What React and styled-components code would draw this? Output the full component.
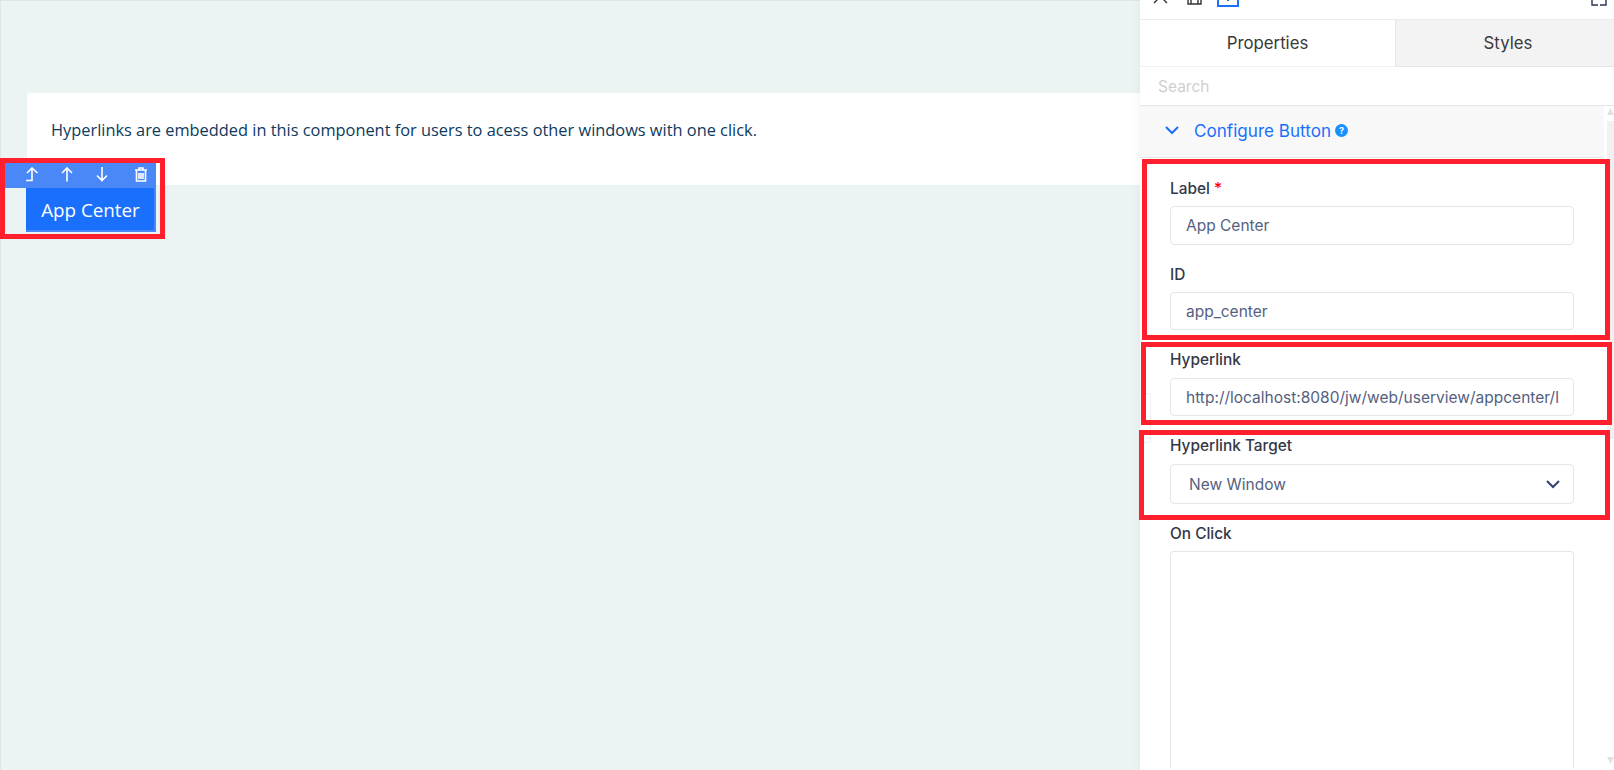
import React from "react";
import styled, { createGlobalStyle } from "styled-components";

const GlobalStyle = createGlobalStyle`
  html, body {
    margin: 0;
    padding: 0;
    height: 770px;
    overflow: hidden;
    background: #fff;
  }
  * {
    box-sizing: border-box;
  }
`;

const Page = styled.div`
  display: flex;
  width: 1614px;
  height: 770px;
  overflow: hidden;
`;

const Canvas = styled.main`
  width: 1140px;
  height: 770px;
  flex: none;
  padding: 92px 0 0 26px;
  background: #ecf3f3;
  border-left: 1px solid #e0e5e4;
  border-top: 1px solid #e0e5e4;
  font-family: "Open Sans", sans-serif;
`;

const Card = styled.section`
  height: 92px;
  padding: 25px 24px;
  background: #fff;
  border-radius: 3px 0 0 3px;
  color: #0e3a5e;
  font-size: 16.37px;
  line-height: 24px;
`;

const SelectedButton = styled.div`
  position: relative;
  width: 130px;
  height: 44px;
  margin: 3px 0 0 -1px;
  padding: 0 2px 2px 0;
  background: #4a88f7;
`;

const ButtonFace = styled.a`
  display: flex;
  align-items: center;
  justify-content: center;
  height: 100%;
  padding: 2px 0 0 1px;
  background: #1a6ffc;
  color: #fff;
  font-size: 18.8px;
`;

const ActionBar = styled.div`
  position: absolute;
  left: -21px;
  top: -25px;
  width: 151px;
  height: 25px;
  background: #4a88f7;
  color: #fff;
`;

const ActionIcon = styled.svg`
  position: absolute;
  top: 4px;
  left: ${(p) => p.$x}px;
  width: 18px;
  height: 18px;
  fill: none;
  stroke: currentColor;
  stroke-width: 1.6;
`;

const Panel = styled.aside`
  position: relative;
  width: 474px;
  height: 770px;
  flex: none;
  background: #fff;
  box-shadow: -3px 0 8px rgba(0, 0, 0, 0.03);
  font-family: Inter, sans-serif;
  color: #2f3542;
`;

const TopBar = styled.div`
  display: flex;
  align-items: flex-start;
  height: 19px;
  overflow: hidden;
  padding: 0 7px 0 13px;
  color: #333;
`;

const TopIcon = styled.svg`
  flex: none;
  width: ${(p) => p.$size}px;
  height: ${(p) => p.$size}px;
  margin-top: ${(p) => p.$top}px;
  margin-left: ${(p) => p.$gap || 0};
  fill: none;
  stroke: ${(p) => p.$color || "currentColor"};
  stroke-width: ${(p) => p.$weight || 1.4};
`;

const Tabs = styled.div`
  display: flex;
  height: 48px;
  font-size: 16.8px;
`;

const Tab = styled.div`
  display: flex;
  align-items: center;
  justify-content: center;
  width: ${(p) => (p.$active ? 255 : 219)}px;
  padding-left: ${(p) => (p.$active ? 0 : 6)}px;
  border-top: 1px solid #ececec;
  border-left: ${(p) => (p.$active ? "none" : "1px solid #e8e8e8")};
  border-bottom: 1px solid ${(p) => (p.$active ? "#f2f2f2" : "#e6e6e6")};
  background: ${(p) => (p.$active ? "#fff" : "#f3f3f3")};
  color: #3a3a3a;
`;

const SearchRow = styled.div`
  display: flex;
  align-items: center;
  height: 39px;
  padding-left: 18px;
  border-bottom: 1px solid #e4e4e4;
  color: #cfcfcf;
  font-size: 15.5px;
`;

const Body = styled.div`
  display: flex;
`;

const Content = styled.div`
  width: 464px;
`;

const SectionHeader = styled.div`
  display: flex;
  align-items: center;
  height: 52px;
  padding: 0 0 3px 25px;
  background: #f8f8f8;
  border-bottom: 1px solid #e6e6e6;
  color: #1a6ffc;
  font-size: 17.1px;
`;

const SectionTitle = styled.span`
  margin-left: 15px;
`;

const Help = styled.span`
  display: flex;
  align-items: center;
  justify-content: center;
  width: 13px;
  height: 13px;
  margin-left: 4px;
  border-radius: 50%;
  background: #1890ff;
  color: #fff;
  font-size: 9px;
  font-weight: 700;
`;

const Fields = styled.div`
  display: flex;
  flex-direction: column;
  padding: 0 30px;
`;

const Label = styled.label`
  display: block;
  height: 18px;
  line-height: 18px;
  margin: ${(p) => p.$top}px 0 ${(p) => p.$bottom}px;
  font-size: 15.4px;
  font-weight: 450;
  color: #333846;
`;

const Required = styled.span`
  color: #f00;
`;

const Input = styled.div`
  display: flex;
  align-items: center;
  justify-content: space-between;
  height: ${(p) => p.$h}px;
  padding: 0 13px 0 ${(p) => p.$pad || 15}px;
  border: 1px solid #e6e6e6;
  border-radius: 4px;
  color: #55617f;
  font-size: 15.5px;
  white-space: nowrap;
  overflow: hidden;
`;

const Clip = styled.span`
  display: block;
  width: 373px;
  overflow: hidden;
`;

const Textarea = styled.div`
  height: 217px;
  border: 1px solid #e6e6e6;
  border-bottom: none;
  border-radius: 4px 4px 0 0;
`;

const Scrollbar = styled.div`
  position: relative;
  width: 10px;
  height: 664px;
  background: #fff;
`;

const Thumb = styled.div`
  position: absolute;
  top: 15px;
  left: 3px;
  right: 0;
  height: 318px;
  background: #f1f1f1;
`;

const Arrow = styled.svg`
  position: absolute;
  left: 3px;
  ${(p) => (p.$down ? "bottom: 6px;" : "top: 2px;")}
  width: 7px;
  height: 7px;
  fill: #e2e2e2;
`;

const Handle = styled.div`
  position: absolute;
  left: 0;
  top: 393px;
  width: 11px;
  height: 50px;
  background: #fff;
  border: 1px solid #efefef;
  border-left: none;
  border-radius: 0 3px 3px 0;
`;

const RedBox = styled.div`
  position: fixed;
  left: ${(p) => p.$x}px;
  top: ${(p) => p.$y}px;
  width: ${(p) => p.$w}px;
  height: ${(p) => p.$h}px;
  border: 5px solid #ff1f2d;
  pointer-events: none;
`;

const highlights = [
  { x: 0, y: 158, w: 165, h: 81 },
  { x: 1142, y: 159, w: 468, h: 181 },
  { x: 1141, y: 342, w: 471, h: 83 },
  { x: 1139, y: 430, w: 471, h: 90 },
];

export default function App() {
  return (
    <Page>
      <GlobalStyle />
      <Canvas>
        <Card>
          Hyperlinks are embedded in this component for users to acess other
          windows with one click.
        </Card>
        <SelectedButton>
          <ActionBar>
            <ActionIcon $x={21} viewBox="0 0 18 18">
              <path d="M0 13.500h6V1M1 6l5-5 5.500 5" />
            </ActionIcon>
            <ActionIcon $x={53} viewBox="0 0 18 18">
              <path d="M9 14.500V1M4 6l5-5 5 5" />
            </ActionIcon>
            <ActionIcon $x={88} viewBox="0 0 18 18">
              <path d="M9 0v13.500M4 8.500l5 5 5-5" />
            </ActionIcon>
            <ActionIcon $x={127} viewBox="0 0 18 18">
              <path d="M3 3h12M7 3V1h4v2M4.500 3h9v11h-9zM7 6v6M9 6v6M11 6v6" />
            </ActionIcon>
          </ActionBar>
          <ButtonFace>App Center</ButtonFace>
        </SelectedButton>
      </Canvas>
      <Panel>
        <TopBar>
          <TopIcon $size={15} $top={-11} viewBox="0 0 15 15">
            <path d="M1 1l13 13M14 1L1 14" />
          </TopIcon>
          <TopIcon $size={15} $top={-10} $gap="19px" viewBox="0 0 15 15">
            <path d="M1 1h13v13H1zM4 8h7v6H4z" />
          </TopIcon>
          <TopIcon $size={22} $top={-15} $gap="15px" $color="#1a6ffc" $weight={2} viewBox="0 0 22 22">
            <path d="M1 1h20v20H1zM11 13v3" />
          </TopIcon>
          <TopIcon $size={16} $top={-10} $gap="auto" $color="#2a3550" viewBox="0 0 16 16">
            <path d="M1 9v6h6M15 9v6h-6" />
          </TopIcon>
        </TopBar>
        <Tabs>
          <Tab $active>Properties</Tab>
          <Tab>Styles</Tab>
        </Tabs>
        <SearchRow>Search</SearchRow>
        <Body>
          <Content>
            <SectionHeader>
              <svg width="14" height="9" viewBox="0 0 14 9" fill="none" stroke="#1a6ffc" strokeWidth="2">
                <path d="M1 1l6 6 6-6" />
              </svg>
              <SectionTitle>Configure Button</SectionTitle>
              <Help>?</Help>
            </SectionHeader>
            <Fields>
              <Label $top={22} $bottom={8}>
                Label <Required>*</Required>
              </Label>
              <Input $h={39}>App Center</Input>
              <Label $top={21} $bottom={8}>ID</Label>
              <Input $h={38}>app_center</Input>
              <Label $top={21} $bottom={9}>Hyperlink</Label>
              <Input $h={38}>
                <Clip>http://localhost:8080/jw/web/userview/appcenter/login</Clip>
              </Input>
              <Label $top={21} $bottom={9}>Hyperlink Target</Label>
              <Input $h={40} $pad={18}>
                New Window
                <svg width="14" height="9" viewBox="0 0 14 9" fill="none" stroke="#33416b" strokeWidth="2">
                  <path d="M1 1l6 6 6-6" />
                </svg>
              </Input>
              <Label $top={21} $bottom={8}>On Click</Label>
              <Textarea />
            </Fields>
          </Content>
          <Scrollbar>
            <Arrow viewBox="0 0 7 7"><path d="M3.500 0L7 7H0z" /></Arrow>
            <Thumb />
            <Arrow $down viewBox="0 0 7 7"><path d="M0 0h7L3.500 7z" /></Arrow>
          </Scrollbar>
        </Body>
        <Handle />
      </Panel>
      {highlights.map((b) => (
        <RedBox key={b.x} $x={b.x} $y={b.y} $w={b.w} $h={b.h} />
      ))}
    </Page>
  );
}
